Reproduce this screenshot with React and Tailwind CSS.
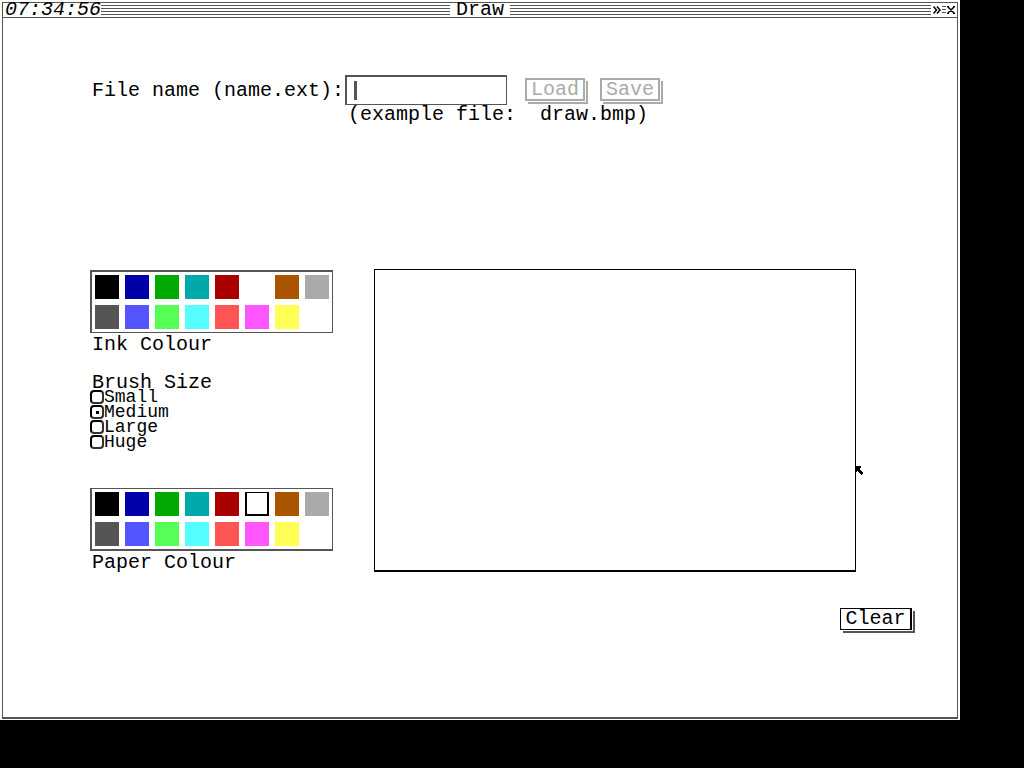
const PALETTE = [
    { name: 'Black', color: 'bg-black' },
    { name: 'Blue', color: 'bg-[#0000aa]' },
    { name: 'Green', color: 'bg-[#00aa00]' },
    { name: 'Cyan', color: 'bg-[#00aaaa]' },
    { name: 'Red', color: 'bg-[#aa0000]' },
    { name: 'Clear', color: 'bg-white' },
    { name: 'Brown', color: 'bg-[#aa5500]' },
    { name: 'Light grey', color: 'bg-[#aaaaaa]' },
    { name: 'Dark grey', color: 'bg-[#555555]' },
    { name: 'Light blue', color: 'bg-[#5555ff]' },
    { name: 'Light green', color: 'bg-[#55ff55]' },
    { name: 'Light cyan', color: 'bg-[#55ffff]' },
    { name: 'Light red', color: 'bg-[#ff5555]' },
    { name: 'Magenta', color: 'bg-[#ff55ff]' },
    { name: 'Yellow', color: 'bg-[#ffff55]' },
    { name: 'White', color: 'bg-white' },
];

const BRUSHES = ['Small', 'Medium', 'Large', 'Huge'];

const TitleBar = () => (
    <header className="relative flex h-[15px] items-center justify-between border-b border-[#555] bg-[repeating-linear-gradient(to_bottom,#fff_0px,#fff_2px,#555_2px,#555_3px)]">
        <time className="bg-white pl-0.5 italic leading-[14px]">07:34:56</time>
        <h1 className="absolute left-1/2 -translate-x-1/2 bg-white px-1.5 leading-[14px]">Draw</h1>
        <div className="flex h-3.5 items-center bg-white pl-0.5">
            <button aria-label="Send to back">
                <svg className="h-2 w-2" viewBox="0 0 8 8" fill="none" stroke="black" strokeWidth="1.5">
                    <path d="M0.5 0.5L3.5 4L0.5 7.5M4 0.5L7 4L4 7.5" />
                </svg>
            </button>
            <button aria-label="Resize" className="px-px">
                <svg className="h-2 w-1" viewBox="0 0 4 8" stroke="#555">
                    <path d="M0 0.5H4M0 3.5H4M0 6.5H4" />
                </svg>
            </button>
            <button aria-label="Close" className="pr-0.5">
                <svg className="h-2 w-2" viewBox="0 0 8 8" fill="none" stroke="black" strokeWidth="1.5">
                    <path d="M0 0.5H2M6 0.5H8M1 1L7 7M7 1L1 7M0 7.5H2M6 7.5H8" />
                </svg>
            </button>
        </div>
    </header>
);

const Palette = ({ label, selected, frame }) => (
    <section>
        <div className={`grid w-fit grid-cols-8 gap-1.5 border border-l-2 border-[#555] p-[3px] ${frame}`}>
            {PALETTE.map(({ name, color }) => (
                <button
                    key={name}
                    aria-label={`${label}: ${name}`}
                    className={`h-6 w-6 ${color} ${name === selected ? 'border-2 border-t border-black' : ''}`}
                />
            ))}
        </div>
        <h2 className="pl-0.5 leading-6">{label}</h2>
    </section>
);

const BrushSize = () => (
    <fieldset className="mt-[18px]">
        <legend className="pl-0.5 leading-[15px]">Brush Size</legend>
        {BRUSHES.map((size) => (
            <label key={size} className="flex h-[15px] items-start text-lg leading-[15px]">
                <input
                    type="radio"
                    name="brush"
                    defaultChecked={size === 'Medium'}
                    className="h-3.5 w-3.5 shrink-0 appearance-none rounded-[4px] border-2 border-black border-r-[#333] border-b-[#333] bg-white checked:bg-[linear-gradient(#000,#000)] bg-[length:3px_3px] bg-center bg-no-repeat"
                />
                {size}
            </label>
        ))}
    </fieldset>
);

const FileButton = ({ children }) => (
    <button disabled className="h-[23px] w-[60px] border-2 border-[#aaa] leading-5 text-[#aaa] shadow-[1px_1px_0_white,3px_3px_0_#aaa]">
        {children}
    </button>
);

const App = () => {
    return (
        <div className="min-h-screen bg-black pr-16 pb-12 font-['Liberation_Mono',monospace] text-xl text-black">
            <main className="flex min-h-[calc(100vh-48px)] flex-col bg-white p-0.5 pb-px">
                <div className="flex flex-1 flex-col border border-b-2 border-[#555]">
                    <TitleBar />
                    <form className="mt-[57px] flex items-start pl-[89px]" onSubmit={(e) => e.preventDefault()}>
                        <label htmlFor="file" className="leading-8">File name (name.ext):</label>
                        <div>
                            <div className="relative ml-px h-[30px] w-[162px]">
                                <input id="file" type="text" className="h-full w-full border border-l-2 border-t-2 border-[#555] px-2 caret-transparent outline-none" />
                                <span className="absolute left-[9px] top-1.5 h-[19px] w-[3px] bg-[#555]" />
                            </div>
                            <p className="w-0 whitespace-pre pl-1 leading-5">(example file:  draw.bmp)</p>
                        </div>
                        <div className="mt-[3px] ml-[18px] flex gap-[15px]">
                            <FileButton>Load</FileButton>
                            <FileButton>Save</FileButton>
                        </div>
                    </form>
                    <div className="mt-36 flex items-start gap-[41px] pl-[87px] pr-[101px]">
                        <div className="shrink-0 pt-px">
                            <Palette label="Ink Colour" frame="border-t-2" />
                            <BrushSize />
                            <div className="mt-[38px]">
                                <Palette label="Paper Colour" selected="Clear" frame="border-b-2" />
                            </div>
                        </div>
                        <div className="relative h-[303px] flex-1 border border-b-2 border-black">
                            <svg className="absolute -right-2 top-[196px] h-2.5 w-2" viewBox="0 0 8 10">
                                <path d="M0 0H6V2H5V4H6V5H7V6H8V8H7V9H6V8H5V7H4V6H3V5H2V6H0Z" />
                            </svg>
                        </div>
                    </div>
                    <div className="mt-[33px] flex justify-end pr-[45px]">
                        <button className="h-[22px] w-[72px] border border-r-2 border-black bg-white leading-5 shadow-[1px_1px_0_white,3px_3px_0_#555]">Clear</button>
                    </div>
                </div>
            </main>
        </div>
    );
};

export default App;
